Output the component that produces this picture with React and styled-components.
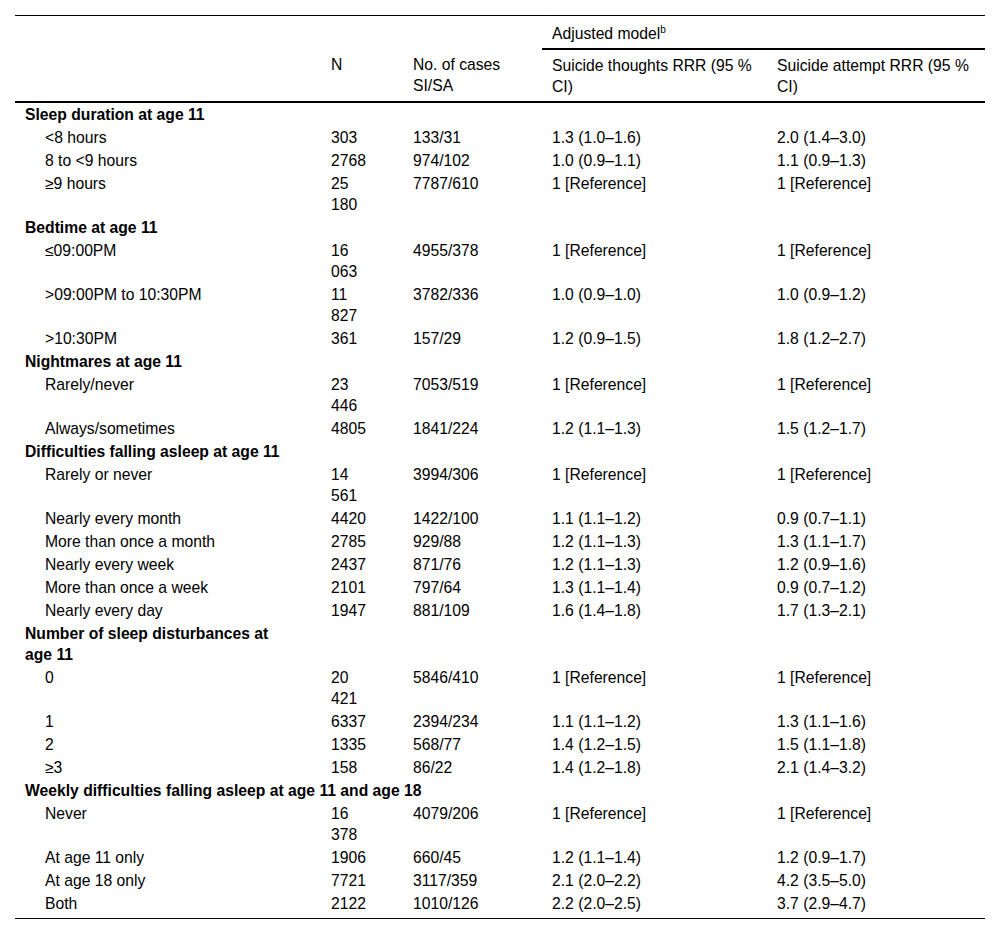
import styled, { createGlobalStyle } from "styled-components";

const GlobalStyle = createGlobalStyle`
  body {
    margin: 0;
    background: #fff;
    font-family: "Liberation Sans", Arial, sans-serif;
    color: #000;
  }
`;

const Page = styled.div`
  padding: 15px;
`;

const Table = styled.table`
  width: 970px;
  border-collapse: collapse;
  table-layout: fixed;
  font-size: 15.7px;
  line-height: 21px;
  border-top: 1px solid #000;
  border-bottom: 1px solid #000;
`;

const HeadCell = styled.th`
  text-align: left;
  font-weight: normal;
  vertical-align: top;
  padding: ${(p) => (p.$top ? "7px 10px 4px" : "5px 10px 4px")};
  border-bottom: ${(p) => (p.$rule ? "2px solid #000" : "none")};
`;

const HeadRow = styled.tr`
  border-bottom: ${(p) => (p.$rule ? "2px solid #000" : "none")};
`;

const Sup = styled.sup`
  font-size: 10px;
  line-height: 0;
  vertical-align: 6px;
`;

const Cell = styled.td`
  vertical-align: top;
  padding: 1px 10px;
  padding-left: ${(p) => (p.$indent ? "30px" : "10px")};
  font-weight: ${(p) => (p.$bold ? "bold" : "normal")};
`;

const BodyRow = styled.tr`
  & > td {
    padding-bottom: ${(p) => (p.$last ? "4px" : "1px")};
  }
`;

const groups = [
  {
    title: "Sleep duration at age 11",
    rows: [
      ["<8 hours", ["303"], "133/31", "1.3 (1.0–1.6)", "2.0 (1.4–3.0)"],
      ["8 to <9 hours", ["2768"], "974/102", "1.0 (0.9–1.1)", "1.1 (0.9–1.3)"],
      ["≥9 hours", ["25", "180"], "7787/610", "1 [Reference]", "1 [Reference]"],
    ],
  },
  {
    title: "Bedtime at age 11",
    rows: [
      ["≤09:00PM", ["16", "063"], "4955/378", "1 [Reference]", "1 [Reference]"],
      [">09:00PM to 10:30PM", ["11", "827"], "3782/336", "1.0 (0.9–1.0)", "1.0 (0.9–1.2)"],
      [">10:30PM", ["361"], "157/29", "1.2 (0.9–1.5)", "1.8 (1.2–2.7)"],
    ],
  },
  {
    title: "Nightmares at age 11",
    rows: [
      ["Rarely/never", ["23", "446"], "7053/519", "1 [Reference]", "1 [Reference]"],
      ["Always/sometimes", ["4805"], "1841/224", "1.2 (1.1–1.3)", "1.5 (1.2–1.7)"],
    ],
  },
  {
    title: "Difficulties falling asleep at age 11",
    rows: [
      ["Rarely or never", ["14", "561"], "3994/306", "1 [Reference]", "1 [Reference]"],
      ["Nearly every month", ["4420"], "1422/100", "1.1 (1.1–1.2)", "0.9 (0.7–1.1)"],
      ["More than once a month", ["2785"], "929/88", "1.2 (1.1–1.3)", "1.3 (1.1–1.7)"],
      ["Nearly every week", ["2437"], "871/76", "1.2 (1.1–1.3)", "1.2 (0.9–1.6)"],
      ["More than once a week", ["2101"], "797/64", "1.3 (1.1–1.4)", "0.9 (0.7–1.2)"],
      ["Nearly every day", ["1947"], "881/109", "1.6 (1.4–1.8)", "1.7 (1.3–2.1)"],
    ],
  },
  {
    title: ["Number of sleep disturbances at", "age 11"],
    rows: [
      ["0", ["20", "421"], "5846/410", "1 [Reference]", "1 [Reference]"],
      ["1", ["6337"], "2394/234", "1.1 (1.1–1.2)", "1.3 (1.1–1.6)"],
      ["2", ["1335"], "568/77", "1.4 (1.2–1.5)", "1.5 (1.1–1.8)"],
      ["≥3", ["158"], "86/22", "1.4 (1.2–1.8)", "2.1 (1.4–3.2)"],
    ],
  },
  {
    title: "Weekly difficulties falling asleep at age 11 and age 18",
    span: 5,
    rows: [
      ["Never", ["16", "378"], "4079/206", "1 [Reference]", "1 [Reference]"],
      ["At age 11 only", ["1906"], "660/45", "1.2 (1.1–1.4)", "1.2 (0.9–1.7)"],
      ["At age 18 only", ["7721"], "3117/359", "2.1 (2.0–2.2)", "4.2 (3.5–5.0)"],
      ["Both", ["2122"], "1010/126", "2.2 (2.0–2.5)", "3.7 (2.9–4.7)"],
    ],
  },
];

const Lines = ({ parts }) =>
  parts.map((p, i) => (
    <span key={i}>
      {i > 0 && <br />}
      {p}
    </span>
  ));

const GroupRows = ({ group, isLastGroup }) => (
  <>
    <BodyRow>
      <Cell $bold colSpan={group.span || 1}>
        {Array.isArray(group.title) ? <Lines parts={group.title} /> : group.title}
      </Cell>
      {!group.span && <Cell colSpan={4} />}
    </BodyRow>
    {group.rows.map((r, i) => (
      <BodyRow key={i} $last={isLastGroup && i === group.rows.length - 1}>
        <Cell $indent>{r[0]}</Cell>
        <Cell>
          <Lines parts={r[1]} />
        </Cell>
        <Cell>{r[2]}</Cell>
        <Cell>{r[3]}</Cell>
        <Cell>{r[4]}</Cell>
      </BodyRow>
    ))}
  </>
);

const App = () => {
  return (
    <>
      <GlobalStyle />
      <Page>
        <Table>
          <colgroup>
            <col style={{ width: 306 }} />
            <col style={{ width: 82 }} />
            <col style={{ width: 139 }} />
            <col style={{ width: 225 }} />
            <col style={{ width: 218 }} />
          </colgroup>
          <thead>
            <tr>
              <HeadCell $top colSpan={3} />
              <HeadCell $top $rule colSpan={2}>
                Adjusted model<Sup>b</Sup>
              </HeadCell>
            </tr>
            <HeadRow $rule>
              <HeadCell />
              <HeadCell>N</HeadCell>
              <HeadCell>No. of cases SI/SA</HeadCell>
              <HeadCell>Suicide thoughts RRR (95 % CI)</HeadCell>
              <HeadCell>Suicide attempt RRR (95 % CI)</HeadCell>
            </HeadRow>
          </thead>
          <tbody>
            {groups.map((g, i) => (
              <GroupRows key={i} group={g} isLastGroup={i === groups.length - 1} />
            ))}
          </tbody>
        </Table>
      </Page>
    </>
  );
};

export default App;
